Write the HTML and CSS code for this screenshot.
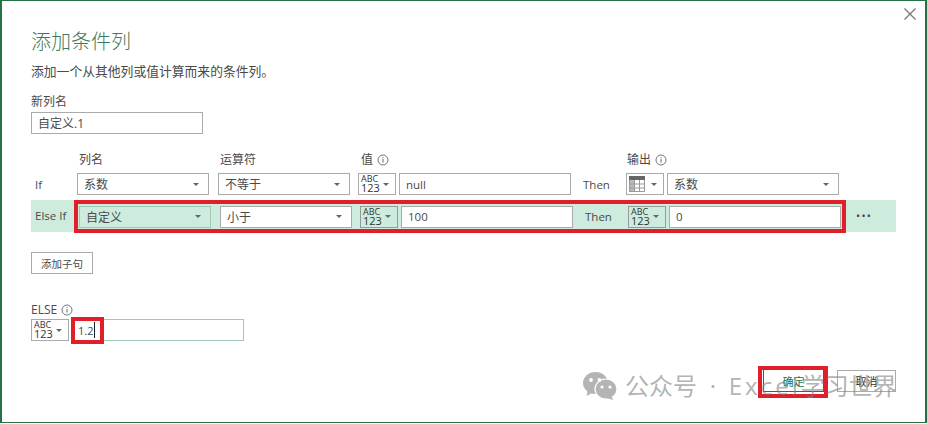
FILE: index.html
```html
<!DOCTYPE html>
<html lang="en">
<head>
    <meta charset="UTF-8">
    <title>添加条件列</title>
    <link rel="stylesheet" href="styles.css">
</head>
<body>
    <svg class="icon-defs" width="0" height="0">
        <symbol id="info" viewBox="0 0 12 12">
            <circle cx="6" cy="6" r="5" fill="none" stroke="#666" stroke-width="0.9"/>
            <rect x="5.5" y="5" width="1" height="3.6" fill="#666"/>
            <rect x="5.5" y="3.2" width="1" height="1" fill="#666"/>
        </symbol>
    </svg>

    <div class="dialog">
        <button class="close" aria-label="close">
            <svg width="12" height="12" viewBox="0 0 12 12"><path d="M0.5 0.5L11.5 11.5M11.5 0.5L0.5 11.5" stroke="#777" stroke-width="1.3" fill="none"/></svg>
        </button>

        <h1>添加条件列</h1>
        <p class="subtitle">添加一个从其他列或值计算而来的条件列。</p>

        <label class="name-label">新列名</label>
        <div class="field name-input">自定义.1</div>

        <div class="head-row">
            <span class="head head-col">列名</span>
            <span class="head head-op">运算符</span>
            <span class="head head-val">值 <svg class="info"><use href="#info"/></svg></span>
            <span class="head">输出 <svg class="info"><use href="#info"/></svg></span>
        </div>

        <div class="rule-row">
            <span class="rule-label if-label">If</span>
            <div class="field select">系数<i class="caret"></i></div>
            <div class="field select">不等于<i class="caret"></i></div>
            <div class="field type"><span class="abc"><b>ABC</b><b class="num">123</b></span><i class="caret"></i></div>
            <div class="field value">null</div>
            <span class="then">Then</span>
            <div class="field type">
                <svg class="table-icon" width="16" height="16" viewBox="0 0 16 16">
                    <rect width="16" height="16" fill="#fff"/>
                    <rect width="16" height="4" fill="#666"/>
                    <rect y="4" width="5" height="12" fill="#bbb"/>
                    <path d="M0.5 4V15.5H15.5V4M5.5 4V16M10.5 4V16M0 8H16M0 12H16" stroke="#999" fill="none"/>
                </svg>
                <i class="caret"></i>
            </div>
            <div class="field select select-wide">系数<i class="caret"></i></div>
        </div>

        <div class="else-row">
            <span class="rule-label else-label">Else If</span>
            <div class="mark-row">
                <div class="field select active">自定义<i class="caret"></i></div>
                <div class="field select">小于<i class="caret"></i></div>
                <div class="field type active"><span class="abc"><b>ABC</b><b class="num">123</b></span><i class="caret"></i></div>
                <div class="field value">100</div>
                <span class="then">Then</span>
                <div class="field type active"><span class="abc"><b>ABC</b><b class="num">123</b></span><i class="caret"></i></div>
                <div class="field value">0</div>
            </div>
            <span class="dots">•••</span>
        </div>

        <button class="add-btn">添加子句</button>

        <div class="else-label-row">ELSE <svg class="info"><use href="#info"/></svg></div>
        <div class="else-input-row">
            <div class="field type"><span class="abc"><b>ABC</b><b class="num">123</b></span><i class="caret"></i></div>
            <div class="field else-value">1.2<span class="cursor"></span><span class="mark-box else-mark"></span></div>
        </div>

        <div class="footer">
            <button class="btn btn-ok">确定<span class="mark-box ok-mark"></span></button>
            <button class="btn">取消</button>
        </div>

        <div class="watermark">
            <svg width="34" height="28" viewBox="0 0 34 28">
                <ellipse cx="12.5" cy="11" rx="12.5" ry="11" fill="#b4b4b4"/>
                <path d="M5 17L3.5 24L11 20Z" fill="#b4b4b4"/>
                <ellipse cx="23" cy="17" rx="11" ry="10" fill="#b4b4b4" stroke="#fff" stroke-width="1.2"/>
                <path d="M28 24L30.5 28L23 26Z" fill="#b4b4b4"/>
                <circle cx="8" cy="8" r="1.9" fill="#fff"/>
                <circle cx="16.5" cy="8" r="1.9" fill="#fff"/>
                <circle cx="19" cy="15" r="1.6" fill="#fff"/>
                <circle cx="27" cy="15" r="1.6" fill="#fff"/>
            </svg>
            <span class="mark-text">公众号 · <span class="mark-latin">Excel</span>学习世界</span>
        </div>
    </div>
</body>
</html>
```

FILE: styles.css
```css
/* Dialog */
* {
    box-sizing: border-box;
}

body {
    margin: 0;
    background-color: #fff;
    font-family: "Open Sans", "Noto Sans CJK SC", sans-serif;
    font-size: 12px;
    color: #4a4a4a;
}

.icon-defs {
    position: absolute;
}

.dialog {
    position: relative;
    width: 927px;
    height: 423px;
    padding: 0 0 0 29px;
    border: 2px solid #217346;
    border-bottom-width: 1px;
    border-top-width: 1px;
    overflow: hidden;
}

.close {
    position: absolute;
    top: 7px;
    right: 9px;
    padding: 0;
    border: none;
    background: none;
    line-height: 0;
}

h1 {
    margin: 28px 0 0;
    font-size: 20px;
    line-height: 26px;
    font-weight: 300;
    color: #3f7a5c;
}

.subtitle {
    margin: 7px 0 0;
    font-size: 12.8px;
    line-height: 18px;
}

.name-label {
    display: block;
    margin-top: 13px;
    line-height: 18px;
}

/* Inputs */
.field {
    display: flex;
    align-items: center;
    height: 22px;
    flex: none;
    padding: 0 6px;
    border: 1px solid #ababab;
    background-color: #fff;
    white-space: nowrap;
}

.name-input {
    width: 172px;
    margin-top: 1px;
}

.select {
    justify-content: space-between;
    width: 132px;
    padding-right: 9px;
}

.select-wide {
    width: 172px;
}

.value {
    width: 172px;
    font-size: 11.5px;
}

.type {
    justify-content: space-between;
    width: 38px;
    padding: 0 6px 0 2px;
}

.active {
    background-color: #cdecdd;
    border-color: #a2c8b4;
}

.type.active {
    border-color: #999;
}

.caret {
    width: 0;
    height: 0;
    border-left: 3px solid transparent;
    border-right: 3px solid transparent;
    border-top: 3px solid #666;
}

.abc {
    display: flex;
    flex-direction: column;
    color: #333;
}

.abc b {
    font-weight: 400;
    font-size: 9px;
    line-height: 8px;
}

.abc .num {
    font-size: 11px;
    line-height: 10px;
}

/* Rule rows */
.head-row {
    display: flex;
    margin: 17px 0 0 48px;
    line-height: 18px;
}

.head {
    display: flex;
    align-items: center;
    gap: 4px;
}

.head-col {
    width: 141px;
}

.head-op {
    width: 141px;
}

.head-val {
    width: 266px;
}

.info {
    width: 12px;
    height: 12px;
}

.rule-row {
    display: flex;
    align-items: center;
    margin-top: 4px;
}

.rule-label {
    flex: none;
    padding-left: 4px;
    font-size: 11.5px;
}

.if-label {
    width: 46px;
}

.else-label {
    width: 43px;
    line-height: 32px;
}

.rule-row .select:nth-of-type(1),
.mark-row .select:nth-of-type(1) {
    margin-right: 9px;
}

.rule-row .select:nth-of-type(2),
.mark-row .select:nth-of-type(2) {
    margin-right: 8px;
}

.rule-row .type,
.mark-row .type {
    margin-right: 3px;
}

.then {
    flex: none;
    width: 55px;
    padding-left: 12px;
    font-size: 11.5px;
}

.else-row {
    display: flex;
    align-items: flex-start;
    width: 865px;
    height: 32px;
    margin-top: 5px;
    background-color: #cdecdd;
}

.mark-row {
    display: flex;
    align-items: center;
    flex: none;
    width: 772px;
    height: 33px;
    padding: 1px;
    border: 4px solid #e01f2b;
}

.dots {
    margin-left: 10px;
    line-height: 32px;
    font-size: 11px;
    letter-spacing: 1.3px;
    color: #444;
}

/* Bottom part */
.add-btn {
    display: block;
    width: 62px;
    height: 22px;
    margin-top: 20px;
    padding: 0;
    border: 1px solid #ababab;
    background-color: #fff;
    font: inherit;
    font-size: 10.5px;
    color: #4a4a4a;
}

.else-label-row {
    display: flex;
    align-items: center;
    gap: 4px;
    margin-top: 27px;
    line-height: 18px;
}

.else-input-row {
    display: flex;
    gap: 3px;
}

.else-value {
    position: relative;
    width: 172px;
    padding-left: 5px;
    border-color: #a2c8b4;
    font-size: 11px;
}

.cursor {
    width: 1px;
    height: 16px;
    margin-left: 1px;
    background-color: #222;
}

/* Red annotation boxes drawn on top of the screenshot */
.mark-box {
    position: absolute;
    border: 4px solid #e01f2b;
}

.else-mark {
    top: -3px;
    left: -2px;
    width: 33px;
    height: 27px;
}

.ok-mark {
    top: -4px;
    left: -6px;
    width: 70px;
    height: 32px;
}

.footer {
    display: flex;
    justify-content: flex-end;
    gap: 13px;
    width: 865px;
    margin-top: 29px;
}

.btn {
    position: relative;
    width: 59px;
    height: 22px;
    padding: 0;
    border: 1px solid #ababab;
    background-color: #fff;
    font: inherit;
    font-size: 11px;
    color: #333;
}

.btn-ok {
    width: 61px;
    height: 23px;
    margin-top: -1px;
    border: 1px solid #217346;
    outline: 1px solid #fff;
    outline-offset: -2px;
    color: #217346;
}

.watermark {
    position: absolute;
    left: 581px;
    top: 371px;
    display: flex;
    align-items: center;
    gap: 8px;
    font-size: 24px;
    line-height: 28px;
    color: rgba(130, 130, 130, 0.62);
    white-space: nowrap;
    pointer-events: none;
}

.mark-text {
    word-spacing: 6.5px;
}

.mark-latin {
    letter-spacing: 3px;
}
```
